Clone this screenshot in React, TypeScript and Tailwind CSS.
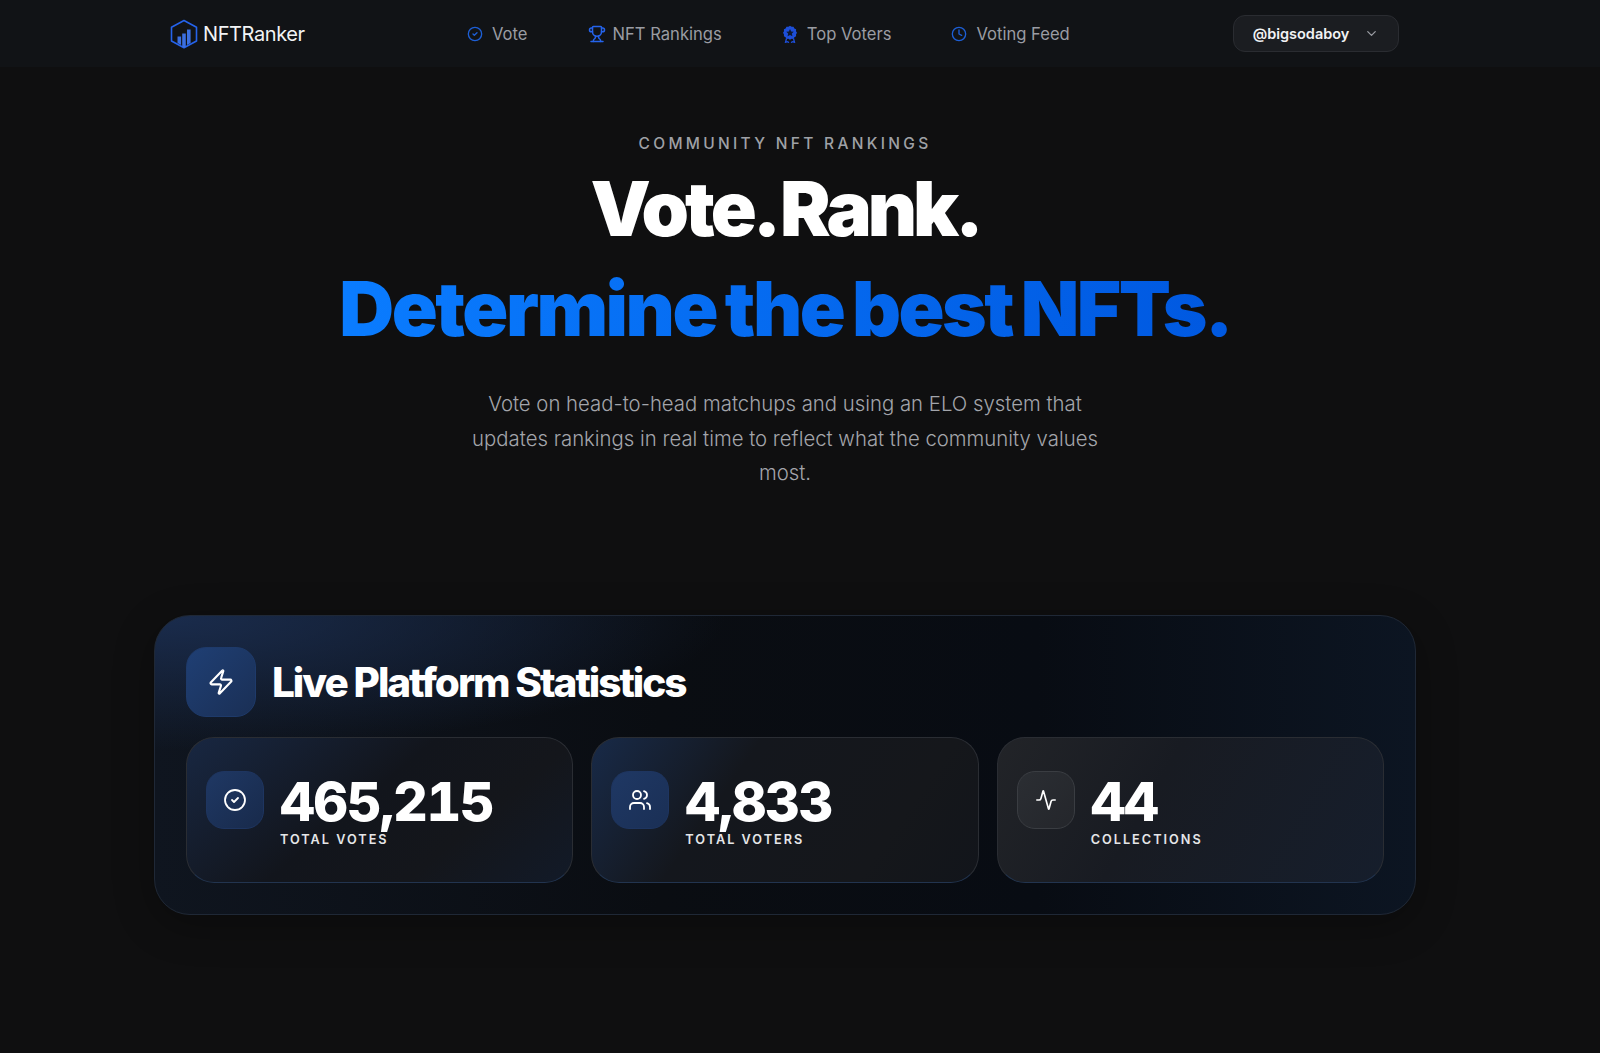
import React from "react"
import { Activity, CheckCircle2, ChevronDown, CircleCheck, Clock, Trophy, Users, Zap } from "lucide-react"

const LogoMark = (): React.ReactElement => (
	<svg width="28" height="30" viewBox="0 0 28 30" fill="none">
		<path d="M14 1.5 26.5 8.2V22L14 28.8 1.5 22V8.2Z" stroke="#2563eb" strokeWidth="1.6" strokeLinejoin="round" />
		<path d="M7.5 17.5h3.6v8.6l-3.6-2zM12.2 14.5h3.6v13.3l-1.8 1-1.8-1zM17 10.5h3.6v13.6L17 26.1z" fill="#3b6fe0" />
	</svg>
)

const AwardMark = (): React.ReactElement => (
	<svg width="16" height="18" viewBox="0 0 16 18" fill="none">
		<path d="M8 .8l1.6 1 1.9-.1.9 1.7 1.7.9-.1 1.9 1 1.6-1 1.6.1 1.9-1.7.9-.9 1.7-1.9-.1-1.6 1-1.6-1-1.9.1-.9-1.7-1.7-.9.1-1.9-1-1.6 1-1.6-.1-1.9 1.7-.9.9-1.7 1.9.1z" fill="#1d4ed8" />
		<path d="M8 4l1.2 2.4 2.6.4-1.9 1.8.5 2.6L8 9.9l-2.4 1.3.5-2.6-1.9-1.8 2.6-.4z" fill="#0f1a33" />
		<path d="M4.5 13.5 3.5 17.3l2.2-.6 1.2 1M11.5 13.5l1 3.8-2.2-.6-1.2 1" stroke="#1d4ed8" strokeWidth="1.3" />
	</svg>
)

const navItems = [
	{ label: "Vote", icon: <CircleCheck size={16} className="text-[#1d5fd6]" />, gap: "gap-[9px]" },
	{ label: "NFT Rankings", icon: <Trophy size={18} className="text-[#2563eb]" />, gap: "gap-[7px]" },
	{ label: "Top Voters", icon: <AwardMark />, gap: "gap-[9px]" },
	{ label: "Voting Feed", icon: <Clock size={16} className="text-[#1d5fd6]" />, gap: "gap-[9px]" }
]

const stats = [
	{
		value: "465,215",
		label: "TOTAL VOTES",
		icon: <CheckCircle2 size={24} strokeWidth={1.8} />,
		iconBox: "bg-[linear-gradient(135deg,#1f3864,#182a4b)] border-[#1e3560]",
		card: "bg-[linear-gradient(140deg,#182742_0%,#12151c_45%,#14161b_70%,#121a28_100%)]"
	},
	{
		value: "4,833",
		label: "TOTAL VOTERS",
		icon: <Users size={24} strokeWidth={1.8} />,
		iconBox: "bg-[linear-gradient(135deg,#1f3864,#1a2f55)] border-[#1e3560]",
		card: "bg-[linear-gradient(125deg,#182a48_0%,#14171d_35%,#15171b_75%,#12151b_100%)]"
	},
	{
		value: "44",
		label: "COLLECTIONS",
		icon: <Activity size={22} strokeWidth={1.8} />,
		iconBox: "bg-[linear-gradient(135deg,#2b2e33,#24262b)] border-[#3a3d42]",
		card: "bg-[linear-gradient(120deg,#222428_0%,#181b22_40%,#161e2c_100%)]"
	}
]

export default function App(): React.ReactElement {
	return (
		<div className="min-h-[1053px] bg-[#0f0f10] text-white font-['Inter',sans-serif] overflow-hidden">
			<nav className="h-[67px] bg-[#111316] flex items-center pl-[170px] pr-[201px]">
				<div className="flex items-center gap-[5px] w-[297px]">
					<LogoMark />
					<span className="text-[20px] leading-none tracking-[-0.4px] font-normal text-[#f2f3f5]">NFTRanker</span>
				</div>
				<div className="flex items-center gap-[60px] text-[16.6px] text-[#9a9ca3] pt-[1px]">
					{navItems.map((item) => (
						<div key={item.label} className={`flex items-center ${item.gap}`}>
							{item.icon}
							<span>{item.label}</span>
						</div>
					))}
				</div>
				<button className="ml-auto w-[166px] h-[37px] rounded-[12px] bg-[#1b1d21] border border-[#2a2c31] flex items-center justify-center gap-[15px] text-[14.5px] font-semibold text-[#f1f2f4]">
					@bigsodaboy
					<ChevronDown size={15} className="text-[#9a9ca3]" />
				</button>
			</nav>

			<main className="flex flex-col items-center pr-[30px]">
				<p className="mt-[67px] text-[15.5px] leading-[20px] tracking-[3.3px] font-medium text-[#9fa1a6]">COMMUNITY NFT RANKINGS</p>
				<h1 className="mt-[4px] text-[76px] leading-[100px] font-black text-center">
					<span className="block text-white tracking-[-4px] [word-spacing:-4px]">Vote. Rank.</span>
					<span className="block tracking-[-2.5px] [word-spacing:-4px] bg-[linear-gradient(90deg,#0a7cff,#0058e0)] bg-clip-text text-transparent">Determine the best NFTs.</span>
				</h1>
				<p className="mt-[29px] w-[660px] text-center text-[20.35px] leading-[34.6px] text-[#a3a5ab] font-light">
					Vote on head-to-head matchups and using an ELO system that<br />updates rankings in real time to reflect what the community values<br />most.
				</p>

				<section className="mt-[124px] w-[1262px] h-[300px] rounded-[36px] border border-[#1f2836] p-[31px] shadow-[0_10px_40px_rgba(0,0,0,0.3)] bg-[radial-gradient(ellipse_at_0%_0%,#1a2c4d_0%,transparent_32%),linear-gradient(90deg,#0f151f_0%,#0a0d12_40%,#080c13_70%,#0c1522_100%)]">
					<div className="flex items-center gap-[16px]">
						<div className="w-[70px] h-[70px] rounded-[20px] border border-[#1e3a6a] bg-[linear-gradient(135deg,#1f3f74,#1a2f55)] flex items-center justify-center">
							<Zap size={28} strokeWidth={1.8} />
						</div>
						<h2 className="text-[40.5px] leading-none font-extrabold tracking-[-2.05px] pt-[2px]">Live Platform Statistics</h2>
					</div>
					<div className="mt-[20px] grid grid-cols-3 gap-[18px]">
						{stats.map((stat) => (
							<div key={stat.label} className={`h-[146px] rounded-[28px] border border-[#2a2d33] border-b-[#22344f] px-[19px] pt-[33px] flex gap-[16px] ${stat.card}`}>
								<div className={`w-[58px] h-[58px] rounded-[18px] border flex items-center justify-center shrink-0 ${stat.iconBox}`}>
									{stat.icon}
								</div>
								<div>
									<div className="text-[54px] leading-[48px] font-extrabold tracking-[-1.5px] tabular-nums mt-[7px]">{stat.value}</div>
									<div className="text-[12.7px] leading-[14px] tracking-[2px] font-semibold text-[#e5e6e8] mt-[7px]">{stat.label}</div>
								</div>
							</div>
						))}
					</div>
				</section>
			</main>
		</div>
	)
}
